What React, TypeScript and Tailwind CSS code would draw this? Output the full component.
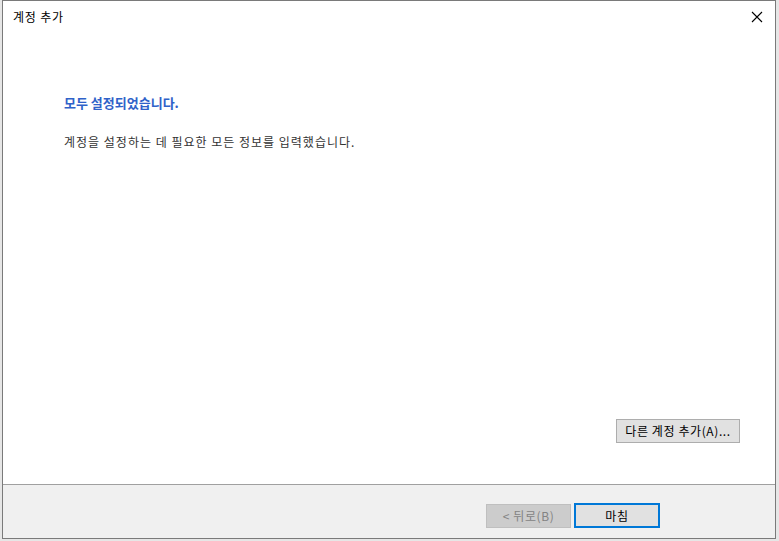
export default function App() {
  const font = { fontFamily: '"Noto Sans CJK KR", "Noto Sans", sans-serif' };
  return (
    <div className="w-[779px] h-[541px] bg-[#e6e6e6] pl-[2px] pr-[3px] pb-[2px]" style={font}>
      <div className="w-full h-full border border-[#7a7a7a] bg-white flex flex-col">
        {/* title bar */}
        <div className="h-[31px] flex items-center justify-between pl-[10px] pr-[9px]">
          <span className="text-[12px] text-[#000] leading-none tracking-[0.8px]">계정 추가</span>
          <svg width="12" height="12" viewBox="0 0 12 12" className="mr-[3px]">
            <path d="M1 1 L11 11 M11 1 L1 11" stroke="#000" strokeWidth="1.1" />
          </svg>
        </div>

        {/* body */}
        <div className="flex-1 flex flex-col pl-[61px] pr-[35px]">
          <div className="mt-[64px] text-[13px] font-semibold text-[#2f62c9] leading-none">
            모두 설정되었습니다.
          </div>
          <div className="mt-[27px] text-[12px] text-[#333] leading-none tracking-[1px]">
            계정을 설정하는 데 필요한 모든 정보를 입력했습니다.
          </div>
          <div className="flex-1" />
          <div className="flex justify-end mb-[41px]">
            <button className="w-[124px] h-[24px] bg-[#e1e1e1] border border-[#adadad] text-[12px] text-[#000] leading-none tracking-[0.6px]">
              다른 계정 추가(A)...
            </button>
          </div>
        </div>

        {/* footer */}
        <div className="h-[54px] bg-[#f0f0f0] border-t border-[#a0a0a0] flex items-center justify-end pr-[115px] gap-[3px] pt-[8px]">
          <button className="w-[85px] h-[24px] bg-[#cccccc] border border-[#bfbfbf] text-[12px] text-[#838383] leading-none tracking-[0.6px]">
            &lt; 뒤로(B)
          </button>
          <button className="w-[86px] h-[25px] bg-[#e1e1e1] border-2 border-[#0078d7] text-[12px] text-[#000] leading-none tracking-[0.6px]">
            마침
          </button>
        </div>
      </div>
    </div>
  );
}
